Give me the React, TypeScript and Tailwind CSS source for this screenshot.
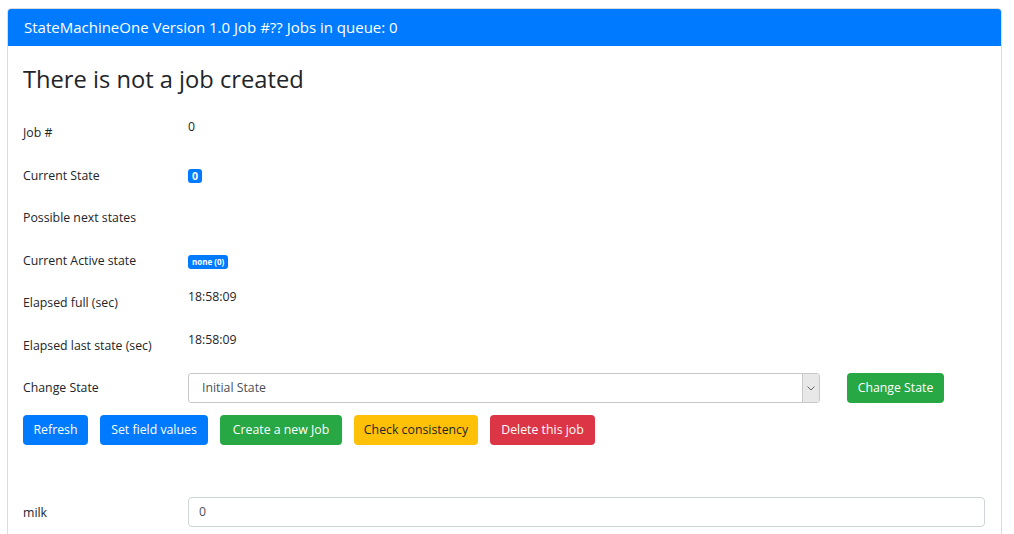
import React from "react";

const font = { fontFamily: '"Open Sans", "Noto Sans", sans-serif' };

function Row({ label, children, badge }: { label: string; children?: React.ReactNode; badge?: boolean }) {
  return (
    <div className="flex h-[42.5px] items-start">
      <div className="w-[165px] pt-[11px] text-[12.3px] leading-[20px] text-[#212529]">{label}</div>
      <div className={badge ? "pt-[7px]" : "pt-[5px] text-[12.3px] leading-[20px] text-[#212529]"}>{children}</div>
    </div>
  );
}

function Btn({ children, cls }: { children: React.ReactNode; cls: string }) {
  return (
    <button className={"h-[30px] rounded-[4px] text-center text-[12.3px] leading-[30px] " + cls}>{children}</button>
  );
}

export default function App() {
  return (
    <div className="min-h-[534px] bg-white pl-[7px] pr-[12px] pt-[8px]" style={font}>
      <div className="overflow-hidden rounded-t-[4px] border border-[#dcdcdc] bg-white">
        <div className="h-[37px] bg-[#007bff] pl-[16px] text-[15px] leading-[37px] text-white">
          StateMachineOne Version 1.0 Job #?? Jobs in queue: 0
        </div>
        <div className="px-[15px] pt-[19px] pb-[20px]">
          <h1 className="mb-[18px] text-[23.7px] leading-[29px] text-[#212529]">There is not a job created</h1>
          <Row label="Job #">0</Row>
          <Row label="Current State" badge>
            <span className="inline-block rounded-[3px] bg-[#007bff] px-[4px] text-[10.5px] font-bold leading-[14px] text-white">0</span>
          </Row>
          <Row label="Possible next states" />
          <Row label="Current Active state" badge>
            <span className="inline-block rounded-[3px] bg-[#007bff] px-[4px] text-[8px] font-bold leading-[14px] text-white">none (0)</span>
          </Row>
          <Row label="Elapsed full (sec)">18:58:09</Row>
          <Row label="Elapsed last state (sec)">18:58:09</Row>
          <div className="flex h-[42px] items-center">
            <div className="w-[165px] text-[12.3px] text-[#212529]">Change State</div>
            <div className="flex h-[30px] w-[632px] items-stretch overflow-hidden rounded-[3px] border border-[#c8c8c8]">
              <div className="flex-1 pl-[13px] text-[12.3px] leading-[28px] text-[#495057]">Initial State</div>
              <div className="flex w-[17px] items-center justify-center border-l border-[#c8c8c8] bg-[#e8e8e8]">
                <svg width="8" height="5" viewBox="0 0 8 5">
                  <path d="M0.5 0.5 L4 4 L7.5 0.5" fill="none" stroke="#666" strokeWidth="1" />
                </svg>
              </div>
            </div>
            <button className="ml-[27px] h-[30px] w-[97px] rounded-[4px] bg-[#28a745] text-center text-[12.3px] text-white">Change State</button>
          </div>
          <div className="mt-[6px] flex gap-[12px]">
            <Btn cls="w-[65px] bg-[#007bff] text-white">Refresh</Btn>
            <Btn cls="w-[108px] bg-[#007bff] text-white">Set field values</Btn>
            <Btn cls="w-[122px] bg-[#28a745] text-white">Create a new Job</Btn>
            <Btn cls="w-[124px] bg-[#ffc107] text-[#212529]">Check consistency</Btn>
            <Btn cls="w-[105px] bg-[#dc3545] text-white">Delete this job</Btn>
          </div>
          <div className="mt-[52px] flex items-center">
            <div className="w-[165px] pt-[2px] text-[12.3px] text-[#212529]">milk</div>
            <div className="mr-[1px] h-[30px] flex-1 rounded-[4px] border border-[#ced4da] pl-[10px] text-[12.3px] leading-[28px] text-[#495057]">0</div>
          </div>
        </div>
      </div>
    </div>
  );
}
